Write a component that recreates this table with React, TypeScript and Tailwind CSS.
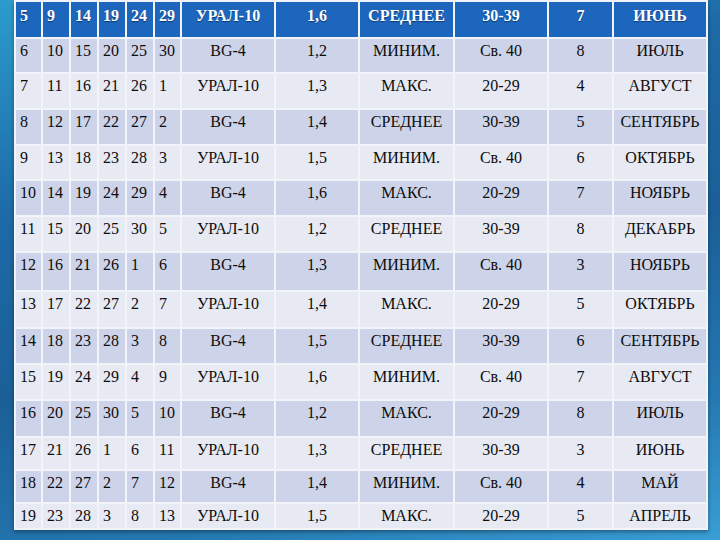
import React from "react";

const rows: string[][] = [
  ["5", "9", "14", "19", "24", "29", "УРАЛ-10", "1,6", "СРЕДНЕЕ", "30-39", "7", "ИЮНЬ"],
  ["6", "10", "15", "20", "25", "30", "BG-4", "1,2", "МИНИМ.", "Св. 40", "8", "ИЮЛЬ"],
  ["7", "11", "16", "21", "26", "1", "УРАЛ-10", "1,3", "МАКС.", "20-29", "4", "АВГУСТ"],
  ["8", "12", "17", "22", "27", "2", "BG-4", "1,4", "СРЕДНЕЕ", "30-39", "5", "СЕНТЯБРЬ"],
  ["9", "13", "18", "23", "28", "3", "УРАЛ-10", "1,5", "МИНИМ.", "Св. 40", "6", "ОКТЯБРЬ"],
  ["10", "14", "19", "24", "29", "4", "BG-4", "1,6", "МАКС.", "20-29", "7", "НОЯБРЬ"],
  ["11", "15", "20", "25", "30", "5", "УРАЛ-10", "1,2", "СРЕДНЕЕ", "30-39", "8", "ДЕКАБРЬ"],
  ["12", "16", "21", "26", "1", "6", "BG-4", "1,3", "МИНИМ.", "Св. 40", "3", "НОЯБРЬ"],
  ["13", "17", "22", "27", "2", "7", "УРАЛ-10", "1,4", "МАКС.", "20-29", "5", "ОКТЯБРЬ"],
  ["14", "18", "23", "28", "3", "8", "BG-4", "1,5", "СРЕДНЕЕ", "30-39", "6", "СЕНТЯБРЬ"],
  ["15", "19", "24", "29", "4", "9", "УРАЛ-10", "1,6", "МИНИМ.", "Св. 40", "7", "АВГУСТ"],
  ["16", "20", "25", "30", "5", "10", "BG-4", "1,2", "МАКС.", "20-29", "8", "ИЮЛЬ"],
  ["17", "21", "26", "1", "6", "11", "УРАЛ-10", "1,3", "СРЕДНЕЕ", "30-39", "3", "ИЮНЬ"],
  ["18", "22", "27", "2", "7", "12", "BG-4", "1,4", "МИНИМ.", "Св. 40", "4", "МАЙ"],
  ["19", "23", "28", "3", "8", "13", "УРАЛ-10", "1,5", "МАКС.", "20-29", "5", "АПРЕЛЬ"],
];

const heights = [
  "h-[37px]", "h-[35px]", "h-[36px]", "h-[36px]", "h-[35px]", "h-[36px]", "h-[36px]", "h-[39px]",
  "h-[37px]", "h-[36px]", "h-[36px]", "h-[37px]", "h-[33px]", "h-[33px]", "h-[26px]",
];

const widths = ["w-[27px]", "w-[28px]", "w-[28px]", "w-[28px]", "w-[28px]", "w-[27px]", "w-[94px]", "w-[84px]", "w-[95px]", "w-[94px]", "w-[65px]", "w-[94px]"];

export default function App() {
  return (
    <div className="w-[720px] h-[540px] overflow-hidden bg-[linear-gradient(165deg,#2c9ccd_0%,#1d6aa6_30%,#1b5f98_55%,#2478b2_80%,#3a9ed4_100%)] pl-[14px] [font-family:Liberation_Serif,serif]">
      <table className="table-fixed border-collapse w-[692px] shadow-[0_2px_4px_rgba(0,0,0,0.35)]">
        <colgroup>
          {widths.map((w, i) => (
            <col key={i} className={w} />
          ))}
        </colgroup>
        <tbody>
          {rows.map((r, ri) => {
            const header = ri === 0;
            const bg = header ? "bg-[#1c66be]" : ri % 2 === 1 ? "bg-[#cdd3e8]" : "bg-[#e7e9f3]";
            return (
              <tr key={ri} className={`${heights[ri]} ${bg}`}>
                {r.map((c, ci) => (
                  <td
                    key={ci}
                    className={`[font-family:Liberation_Serif,serif] align-top border-2 border-[#f2f4fa] p-0 ${
                      ci < 6 ? "text-left pl-[4px]" : "text-center"
                    } ${
                      header
                        ? "pt-[4px] text-white font-bold text-[16px] leading-[19px] [text-shadow:0_1px_1px_rgba(0,0,0,0.45)]"
                        : "pt-[2px] text-[#0d0d0d] text-[16px] leading-[19px]"
                    } whitespace-nowrap`}
                  >
                    {c}
                  </td>
                ))}
              </tr>
            );
          })}
        </tbody>
      </table>
    </div>
  );
}
